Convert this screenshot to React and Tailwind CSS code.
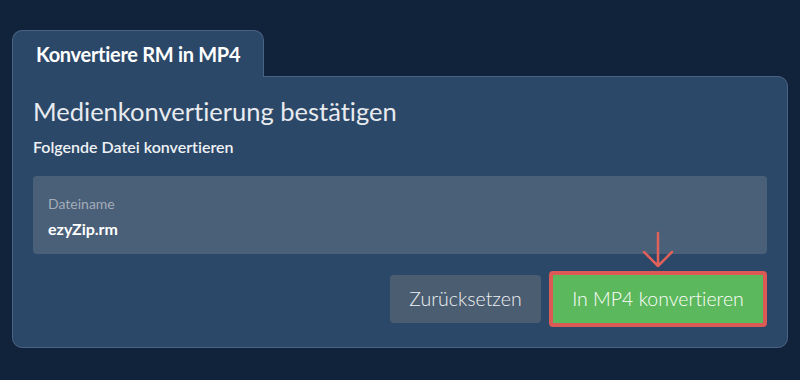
const FONT = {
  fontFamily: "Lato, 'Noto Sans', sans-serif",
  fontVariantLigatures: "none",
};

/* ─── Down arrow pointing at the main action ─── */
const PointerArrow = () => (
  <svg
    width="32"
    height="38"
    viewBox="0 0 32 38"
    fill="none"
    className="absolute left-1/2 -translate-x-1/2 -top-[40px] pointer-events-none"
  >
    <path
      d="M16 2v33M2 21l14 14 14-14"
      stroke="#e0605a"
      strokeWidth="2.5"
      strokeLinecap="round"
      strokeLinejoin="round"
    />
  </svg>
);

export default function App() {
  return (
    <div className="w-[800px] h-[380px] bg-[#10233a] pt-[30px] px-[12px]" style={FONT}>
      {/* Tab */}
      <div className="relative z-10 -mb-px w-[252px] h-[47px] bg-[#2c4868] border border-b-0 border-[#4a6385] rounded-t-[10px] flex items-center pl-[23px]">
        <span className="text-[20px] font-bold text-white tracking-[-0.3px]">
          Konvertiere RM in MP4
        </span>
      </div>

      {/* Panel */}
      <div className="w-[776px] bg-[#2c4868] border border-[#4a6385] rounded-b-[10px] rounded-tr-[10px] px-[20px] pt-[18px] pb-[20px]">
        <h1 className="text-[25.5px] leading-[32px] text-[#e8ebef]">
          Medienkonvertierung bestätigen
        </h1>
        <p className="mt-[10px] text-[16px] leading-[20px] font-semibold text-[#eef1f4]">
          Folgende Datei konvertieren
        </p>

        <div className="mt-[19px] h-[78px] bg-[#4a5f78] rounded-[4px] px-[15px] pt-[19px]">
          <div className="text-[14px] leading-[17px] text-[#a3adba]">Dateiname</div>
          <div className="mt-[7px] text-[16px] leading-[20px] font-bold text-white">ezyZip.rm</div>
        </div>

        <div className="mt-[17px] flex justify-end items-center gap-[8px]">
          <button className="h-[48px] w-[151px] rounded-[4px] bg-[#4b5d71] text-[19.5px] font-light text-[#eef1f4]">
            Zurücksetzen
          </button>
          <div className="relative">
            <PointerArrow />
            <button className="h-[56px] w-[218px] rounded-[4px] border-[4px] border-[#dc5a55] bg-[#5cb85c] text-[19.5px] font-light text-white">
              In MP4 konvertieren
            </button>
          </div>
        </div>
      </div>
    </div>
  );
}
